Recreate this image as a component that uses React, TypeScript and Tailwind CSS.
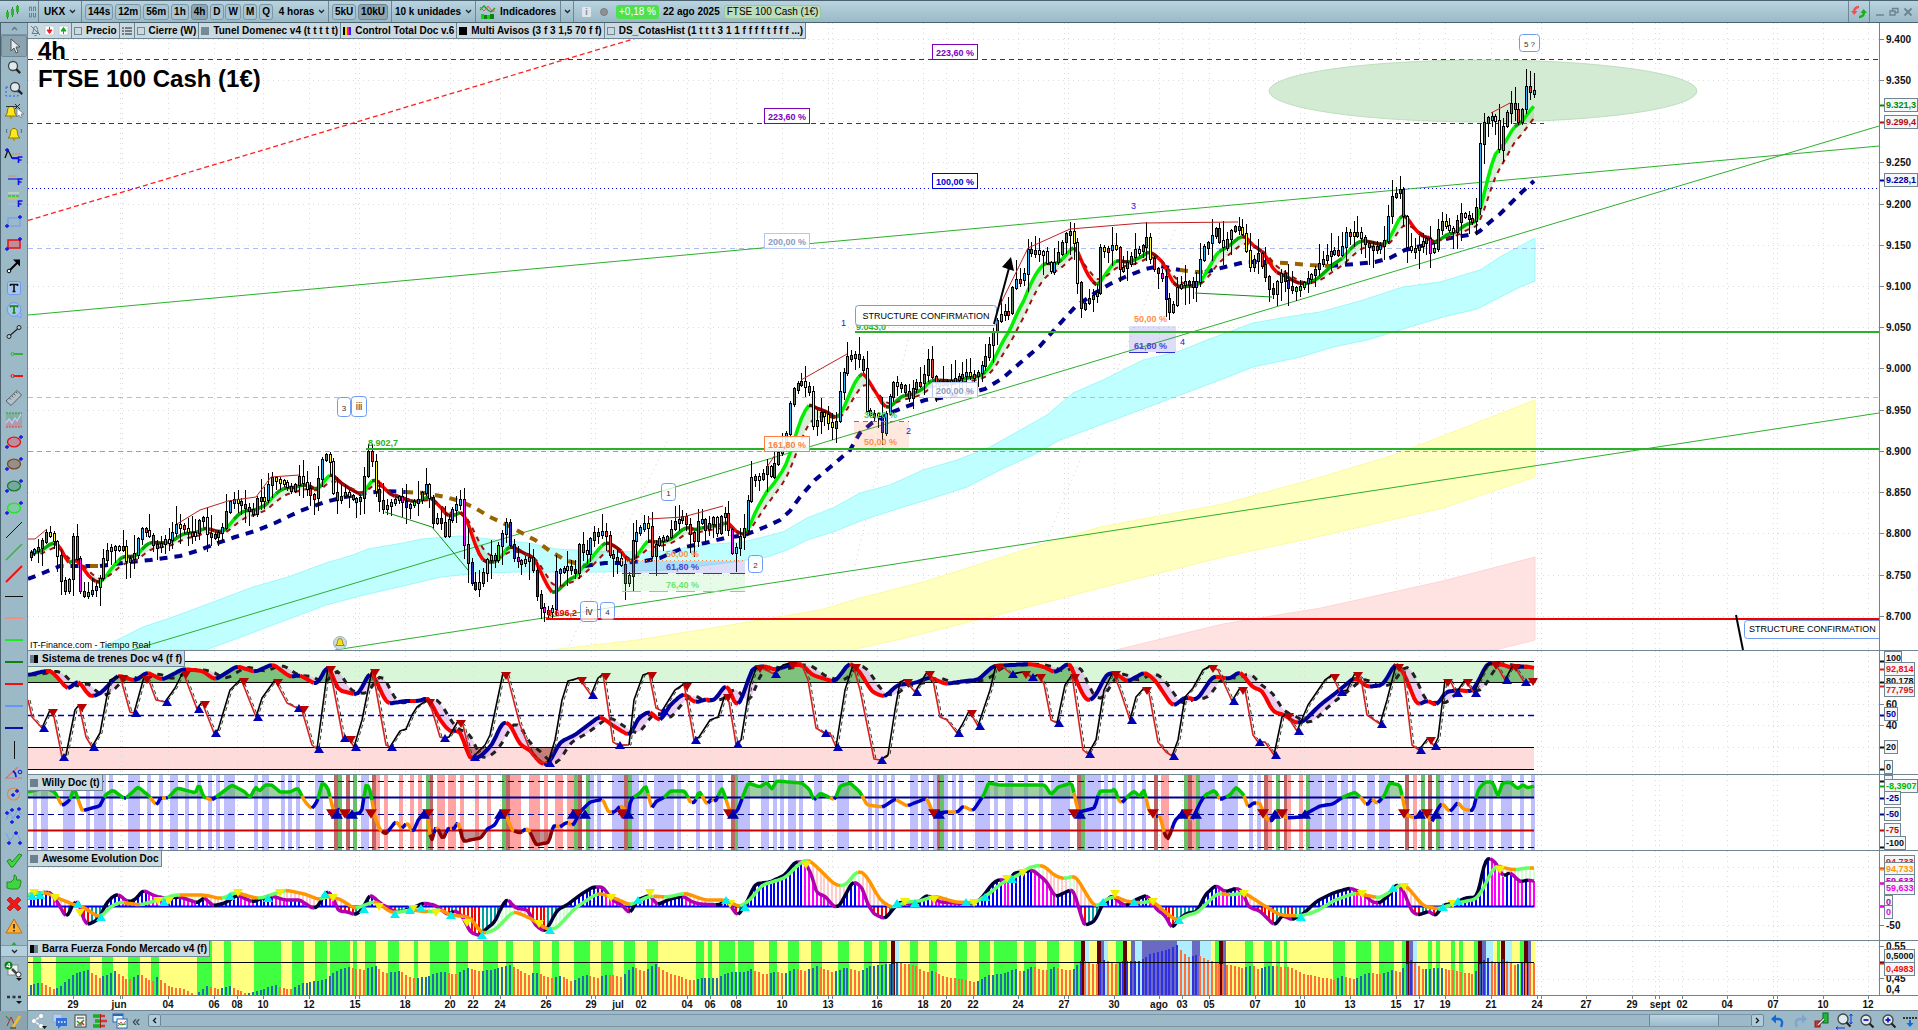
import React from "react";

type Pt = [number, number];

const FONT = "font-['Liberation_Sans',Arial,sans-serif]";
const STEP = 3.835;

function parse(flat: string): Pt[] {
  return flat
    .trim()
    .split(/\s+/)
    .map((p) => {
      const [x, y] = p.split(",");
      return [Number(x), Number(y)] as Pt;
    });
}

function at(pts: Pt[], x: number): number {
  if (x <= pts[0][0]) return pts[0][1];
  for (let i = 1; i < pts.length; i++) {
    if (x <= pts[i][0]) {
      const [x0, y0] = pts[i - 1];
      const [x1, y1] = pts[i];
      return y0 + ((y1 - y0) * (x - x0)) / (x1 - x0);
    }
  }
  return pts[pts.length - 1][1];
}

const str = (pts: Pt[]) => pts.map((p) => `${p[0].toFixed(1)},${p[1].toFixed(1)}`).join(" ");

const BAR_X: number[] = Array.from({ length: 393 }, (_, i) => 30.5 + i * STEP);

/** Resamples a line at an even pace and rounds its corners. */
function soften(pts: Pt[], reach = 2.5): Pt[] {
  const out: Pt[] = [];
  for (let x = 28; x <= 1534; x += 2) {
    out.push([x, (at(pts, x - reach) + 2 * at(pts, x) + at(pts, x + reach)) / 4]);
  }
  return out;
}

function rand(n: number): number {
  const v = Math.sin(n * 127.1 + 311.7) * 43758.5453;
  return v - Math.floor(v);
}

/** Splits a line into runs of one colour each. */
function runs(pts: Pt[], color: (a: Pt, b: Pt) => string): { c: string; pts: Pt[] }[] {
  const out: { c: string; pts: Pt[] }[] = [];
  for (let i = 1; i < pts.length; i++) {
    const c = color(pts[i - 1], pts[i]);
    const last = out[out.length - 1];
    if (last && last.c === c) last.pts.push(pts[i]);
    else out.push({ c, pts: [pts[i - 1], pts[i]] });
  }
  return out;
}

function Runs({ pts, color, w }: { pts: Pt[]; color: (a: Pt, b: Pt) => string; w: number }) {
  return (
    <g fill="none" strokeWidth={w} strokeLinejoin="round">
      {runs(pts, color).map((r, i) => (
        <polyline key={i} points={str(r.pts)} stroke={r.c} />
      ))}
    </g>
  );
}

/* ------------------------------------------------------------------ data */

const CLOSE = parse(`28,556 31,552 39,548 47,530 53,540 58,558 62,587 66,592 70,575 73,533 77,563 81,597 89,593 96,587 102,573 104,553 112,547 123,547 127,563 135,553 140,528 148,533 154,547 160,547 162,540 169,540 177,523 188,533 196,533 202,510 205,533 215,537 223,527 228,503 234,500 249,510 255,517 257,497 265,500 270,477 284,483 292,492 299,477 307,490 314,500 322,460 326,455 332,467 334,503 345,493 353,500 362,497 367,450 372,462 376,493 383,510 391,503 399,497 406,507 418,500 427,482 433,523 439,517 445,537 450,513 460,500 464,547 470,573 473,593 481,580 489,553 494,562 500,540 506,523 512,557 521,563 531,557 536,593 542,613 552,610 554,573 567,567 575,573 578,543 586,557 592,533 605,532 610,557 620,560 627,592 633,537 647,520 652,558 657,540 667,537 675,522 683,517 690,533 695,543 699,513 707,533 712,513 717,533 723,507 728,527 733,557 740,537 745,527 748,497 752,475 760,480 767,467 773,483 775,457 783,447 787,430 791,393 800,380 810,393 813,428 822,410 830,427 835,428 840,390 847,357 857,355 863,370 867,417 877,413 882,433 887,407 893,383 903,387 908,400 915,383 922,383 928,360 933,383 950,382 965,373 975,377 980,370 987,353 992,335 998,318 1003,312 1010,313 1013,280 1023,280 1027,250 1043,252 1050,273 1057,257 1063,240 1068,230 1073,237 1080,310 1088,300 1097,293 1099,248 1110,250 1115,240 1118,270 1125,267 1135,250 1142,253 1145,223 1148,253 1157,277 1160,267 1167,307 1172,317 1175,290 1187,280 1195,290 1202,250 1210,240 1215,227 1222,250 1233,227 1238,227 1245,238 1248,270 1258,253 1263,270 1272,297 1280,273 1290,290 1300,287 1313,273 1320,263 1333,250 1340,257 1345,233 1358,233 1367,247 1380,247 1387,237 1389,200 1400,190 1403,213 1407,247 1415,250 1427,238 1432,260 1440,220 1453,233 1460,213 1475,223 1477,200 1481,128 1484,123 1490,115 1497,123 1500,157 1503,127 1510,103 1515,110 1519,123 1523,107 1526,87 1529,93 1534,91`);

const SLOW_MA = parse(`28,579 43,573 60,566 73,566 90,566 100,566 115,564 130,562 150,560 165,558 180,556 200,550 215,544 235,537 255,531 275,523 300,511 325,502 345,497 365,493 385,491 405,492 425,493 445,497 460,501 475,508 490,517 505,524 520,532 535,540 550,551 565,560 585,566 605,563 620,563 645,561 660,558 685,547 705,543 725,538 745,535 765,527 780,520 790,511 800,497 815,480 835,463 850,450 860,433 872,423 890,413 905,407 925,400 940,398 970,393 985,389 1003,378 1020,363 1040,346 1055,329 1075,307 1095,293 1110,284 1125,277 1145,269 1160,266 1180,270 1195,272 1205,272 1225,267 1245,262 1265,262 1285,263 1310,265 1330,266 1355,264 1375,262 1390,258 1405,250 1425,245 1450,238 1475,234 1480,231 1490,222 1500,214 1510,204 1522,192 1534,181`);

const CYAN = parse(`97,650 143,627 173,617 200,607 253,587 288,577 326,563 353,555 368,549 403,543 422,539 460,536 498,540 529,543 556,549 594,551 610,552 667,551 700,545 743,542 783,532 807,518 833,508 860,493 890,485 923,470 957,460 990,447 1017,432 1047,415 1073,393 1103,380 1143,360 1180,351 1207,340 1253,323 1287,317 1320,312 1360,301 1403,287 1440,282 1480,270 1500,257 1535,238 1535,281 1520,287 1477,309 1443,317 1400,330 1367,340 1333,347 1300,357 1253,367 1220,380 1180,395 1140,410 1100,425 1060,440 1033,455 1000,470 967,487 933,498 900,508 863,520 833,532 807,540 787,550 767,557 733,562 667,570 600,572 517,572 479,573 441,577 403,586 364,595 326,605 233,640 205,650`);
const YELLOW = parse(`550,650 637,640 700,630 820,610 860,598 923,582 983,563 1033,547 1067,537 1100,527 1223,504 1321,477 1394,455 1535,400 1535,477 1443,508 1321,536 1223,557 1100,588 1017,610 897,640 850,650`);
const PINK = parse(`1116,650 1157,640 1223,624 1321,608 1443,581 1535,557 1535,640 1495,650`);

const STOCH = parse(`28,700 32,717 42,728 50,710 54,717 62,757 66,755 75,710 79,705 86,737 92,747 100,733 110,680 120,676 130,712 134,713 144,677 149,681 156,700 165,702 175,688 183,672 197,709 202,702 214,733 218,730 230,690 241,679 256,717 262,698 275,680 287,703 297,708 301,707 312,745 317,749 328,667 333,685 343,738 348,737 354,747 362,720 372,670 375,684 386,745 390,747 400,731 406,729 412,715 417,707 427,700 432,710 440,737 443,738 449,737 458,721 463,725 470,755 473,757 485,745 490,735 503,673 507,675 520,725 532,755 541,762 548,763 555,740 562,700 568,681 579,678 591,695 598,678 603,674 613,742 618,745 629,745 634,700 643,675 649,673 656,708 662,711 675,690 684,684 694,740 699,737 710,720 718,717 725,695 729,702 736,744 741,740 750,685 757,666 770,672 774,674 783,665 790,663 801,663 808,680 816,728 824,733 830,733 836,747 845,690 853,665 860,690 874,759 880,760 888,755 895,710 900,682 905,680 915,692 927,672 933,680 940,717 947,720 957,733 962,725 969,711 974,719 978,726 990,690 996,665 1001,665 1011,674 1023,672 1031,677 1038,675 1044,684 1051,720 1057,723 1065,685 1072,675 1083,750 1088,754 1096,740 1104,690 1113,672 1120,690 1130,720 1136,697 1144,688 1149,693 1158,742 1166,752 1172,756 1178,740 1185,697 1193,688 1203,670 1210,666 1218,670 1232,701 1240,688 1245,690 1253,735 1258,742 1265,742 1274,755 1282,717 1286,714 1297,731 1308,705 1325,680 1332,675 1340,692 1347,690 1355,673 1361,678 1367,715 1380,724 1387,700 1396,665 1403,670 1412,745 1419,750 1428,738 1434,746 1438,738 1445,680 1450,680 1456,693 1465,680 1474,693 1480,680 1487,665 1493,663 1498,668 1505,680 1513,665 1518,672 1524,682 1534,682`);

const TREND = soften(
  parse(`28,675 50,670 58,678 68,690 78,680 90,697 100,694 118,675 135,681 147,672 162,680 183,669 203,671 215,680 237,666 255,672 273,664 290,677 300,675 317,685 328,664 338,690 358,695 371,670 387,704 405,701 420,701 428,697 440,720 450,732 460,730 470,760 480,757 492,745 503,721 510,724 520,745 530,750 540,763 548,765 560,742 575,735 600,716 612,725 620,730 630,736 638,718 650,711 660,722 670,705 684,693 695,703 706,699 714,701 727,683 737,709 745,690 752,668 765,666 775,670 790,665 803,665 812,675 835,682 850,662 860,672 872,692 885,697 897,685 915,683 930,677 945,684 965,681 978,680 993,666 1030,664 1045,667 1055,673 1070,662 1078,685 1087,702 1095,697 1107,673 1117,674 1127,682 1145,672 1155,680 1165,695 1173,707 1185,697 1197,700 1213,676 1230,679 1240,671 1253,688 1262,690 1273,712 1285,715 1295,723 1303,722 1320,705 1337,692 1355,677 1367,687 1383,685 1396,662 1405,675 1417,706 1427,700 1437,706 1445,692 1460,690 1472,692 1480,678 1487,663 1500,664 1513,668 1525,666 1534,668`),
  3.5,
);

const WILLY = parse(`28,792 45,788 55,792 62,806 70,800 74,787 82,811 92,808 100,806 105,795 113,790 125,799 138,787 148,795 157,806 160,798 168,798 177,788 196,793 199,782 203,797 212,800 220,794 232,785 245,792 250,798 256,786 259,792 265,785 272,785 280,792 290,792 298,788 305,802 312,809 318,800 322,782 328,788 334,814 340,808 345,817 355,814 362,812 366,782 371,792 374,815 380,830 386,834 396,821 402,829 407,822 413,833 418,820 427,810 431,845 436,825 443,840 448,828 455,829 458,820 463,842 470,840 481,838 487,829 495,825 500,815 505,813 512,830 520,833 527,828 530,832 536,845 545,843 549,843 553,825 560,827 567,822 573,826 580,812 590,802 603,799 608,812 615,812 620,806 625,808 627,828 630,800 640,793 646,785 652,810 655,802 665,797 670,791 685,791 690,802 695,803 699,790 707,805 712,798 715,803 722,787 730,812 737,812 748,783 760,787 767,782 772,790 776,781 802,783 810,790 814,801 820,793 835,800 840,786 850,783 860,792 867,805 883,807 895,799 907,806 917,802 927,798 933,814 945,812 958,812 963,806 973,811 985,793 988,783 1000,785 1045,785 1051,795 1058,787 1072,783 1078,812 1083,811 1095,808 1099,791 1113,791 1115,787 1118,800 1122,803 1127,797 1134,791 1140,797 1144,788 1149,812 1157,817 1160,815 1164,833 1168,840 1175,820 1183,813 1192,820 1200,803 1205,795 1215,790 1220,800 1230,795 1236,787 1244,795 1248,808 1253,803 1260,803 1265,817 1271,822 1278,812 1287,818 1300,817 1320,806 1333,804 1343,797 1355,792 1363,800 1367,806 1372,798 1377,804 1385,795 1389,783 1400,785 1406,815 1415,818 1425,812 1432,823 1437,810 1442,803 1450,812 1458,802 1463,809 1473,811 1478,790 1485,782 1493,782 1498,798 1502,783 1510,782 1518,789 1523,784 1527,788 1534,786`);

const AO_FAST = parse(`28,895 40,893 50,892 58,903 67,919 72,905 78,900 85,924 90,924 100,918 105,905 112,897 118,894 128,902 135,900 143,890 155,896 165,898 180,897 198,903 204,897 213,906 225,903 237,895 253,902 262,898 272,896 285,900 300,900 312,908 317,908 327,890 333,897 338,911 348,912 355,915 362,910 370,894 380,903 395,912 403,911 415,907 423,903 435,905 448,915 455,910 463,917 470,932 480,936 487,928 495,922 500,910 507,898 515,908 528,910 535,925 545,932 552,920 557,910 567,905 580,895 593,887 603,887 612,900 622,905 630,914 637,900 650,895 657,905 670,899 683,896 692,902 700,904 720,905 727,898 733,910 738,916 747,902 755,884 770,882 785,875 795,862 805,862 813,878 816,893 825,896 835,908 840,905 848,890 853,881 862,887 868,905 874,914 885,919 893,909 900,902 915,905 927,895 940,902 970,904 980,900 993,883 1000,879 1008,882 1014,873 1022,872 1033,870 1047,882 1055,897 1073,889 1078,905 1084,926 1095,921 1102,905 1112,895 1120,903 1127,906 1135,900 1147,895 1157,910 1165,915 1172,929 1178,920 1187,913 1197,912 1205,895 1216,885 1225,892 1237,888 1243,892 1248,907 1260,911 1275,926 1282,915 1292,920 1303,914 1317,901 1333,893 1350,888 1363,893 1372,902 1380,903 1390,894 1397,883 1403,890 1412,912 1418,915 1430,911 1435,917 1443,905 1455,903 1465,898 1477,897 1481,880 1485,860 1490,858 1496,863 1503,877 1510,872 1520,882 1527,880 1534,881`);

const AO_SLOW = parse(`28,895 45,892 55,897 75,905 83,907 100,918 110,907 120,902 140,905 158,900 175,895 205,895 222,899 235,892 255,898 262,898 285,890 305,894 320,900 327,896 340,899 355,909 375,901 392,913 410,910 430,912 440,909 450,915 470,917 482,934 495,930 505,920 513,911 530,918 548,930 557,928 575,908 598,893 612,897 630,905 650,896 668,897 685,893 705,900 725,900 740,907 750,900 762,885 785,878 800,863 808,859 820,870 835,885 845,886 858,870 866,875 880,900 892,908 905,902 920,901 935,896 955,902 975,903 990,893 1003,882 1015,877 1030,867 1043,865 1055,876 1065,879 1075,875 1084,890 1095,908 1105,900 1115,896 1125,901 1140,903 1153,901 1165,912 1177,921 1187,915 1197,913 1210,900 1218,893 1230,895 1245,893 1260,903 1280,915 1300,916 1315,912 1335,900 1355,893 1380,898 1393,890 1403,883 1410,890 1423,906 1438,909 1450,905 1462,902 1477,899 1485,885 1495,865 1505,868 1515,870 1525,868 1534,868`);

const AO_UP: Pt[] = [[32, 896], [40, 895], [78, 904], [101, 917], [164, 902], [230, 896], [268, 898], [325, 894], [364, 909], [395, 914], [410, 910], [421, 908], [451, 915], [482, 935], [550, 930], [638, 900], [726, 900], [745, 907], [897, 903], [915, 903], [966, 902], [985, 897], [1012, 879], [1103, 902], [1134, 902], [1179, 920], [1301, 917], [1393, 888], [1443, 907], [1458, 901]];
const AO_DOWN: Pt[] = [[34, 893], [55, 898], [80, 913], [158, 901], [169, 901], [238, 893], [280, 893], [333, 898], [379, 907], [413, 909], [436, 913], [467, 923], [539, 924], [611, 898], [650, 893], [730, 904], [806, 865], [905, 902], [934, 900], [974, 903], [1007, 879], [1023, 873], [1115, 894], [1153, 902], [1244, 894], [1362, 894], [1404, 887], [1453, 904], [1500, 870]];

const FORCE = parse(`31,985 40,982 55,990 62,985 75,973 88,970 100,978 115,971 128,980 140,974 152,982 157,977 170,987 185,989 195,995 207,986 220,989 230,986 245,993 255,992 275,985 290,990 303,983 325,980 335,972 347,967 363,970 375,966 385,973 400,971 412,978 425,977 443,971 455,975 467,968 480,971 495,969 510,965 520,970 530,975 535,972 550,978 560,976 572,981 585,975 597,978 607,974 622,977 632,967 645,971 655,964 668,973 680,976 692,981 700,978 717,978 730,972 745,972 751,969 765,975 775,972 785,973 795,968 805,971 817,966 833,972 845,968 860,971 870,966 890,964 897,963 915,965 925,972 933,971 945,977 960,979 975,982 990,975 1003,974 1015,969 1022,972 1033,966 1045,971 1055,967 1072,971 1082,960 1095,965 1105,960 1115,964 1125,961 1140,961 1152,953 1168,950 1177,945 1187,957 1198,955 1215,963 1230,965 1243,968 1252,965 1258,969 1270,966 1290,967 1303,974 1320,977 1335,980 1343,976 1355,979 1367,973 1380,974 1393,970 1400,972 1411,960 1422,969 1443,968 1460,972 1475,974 1481,962 1487,958 1497,964 1503,959 1515,965 1523,962 1534,963`);

/** Colour bands: start of the block, then from-to pairs in thirds of a unit. */
type Bands = [number, string][];

const WILLY_BANDS: Record<string, Bands> = {
  "#bfbffd": [
    [20, "38-50 64-84 129-165 198-210 222-258 266-278 325-360 381-393 417-429 450-474 495-507 531-543 564-576 588-600 612-645 702-714 726-747 783-795 804-816 828-840 885-909 1023-1047"],
    [500, "270-282 291-303 336-372 396-417 429-441 462-522 531-543 588-600 624-636 645-669 714-750 783-807 819-831 840-852 864-888 897-909 942-966 1011-1047 1104-1116 1125-1137 1149-1161 1173-1185 1230-1254 1263-1287 1299-1311 1332-1344 1356-1368 1377-1389 1425-1470 1482-1494"],
    [1000, "15-39 72-84 117-129 153-210 255-303 312-324 336-348 369-381 393-405 426-438 600-645 666-714 747-759 771-783 930-966 975-1011 1023-1044 1056-1068 1101-1125 1137-1170 1320-1332 1353-1377 1389-1410 1422-1458 1467-1479"],
    [1440, "183-216 240-252 273-285"],
  ],
  "#c06868": [
    [20, "942-954 978-990 1056-1068 1230-1239 1458-1470"],
    [500, "234-246 372-384 693-705 1311-1320"],
    [1000, "231-243 462-474 564-576 792-804 852-861 1215-1227 1284-1296"],
  ],
  "#68c068": [
    [20, "954-966 999-1011 1218-1230 1446-1458"],
    [500, "222-234 258-270 384-396 705-714 1320-1332"],
    [1000, "243-255 552-564 588-600 828-840 918-930 1263-1275 1308-1320"],
  ],
  "#ffa3a3": [
    [20, "1068-1080 1092-1104 1137-1149 1170-1182 1194-1206 1251-1275 1284-1308 1320-1332 1365-1377 1401-1413 1470-1503"],
    [500, "87-120 132-144 165-189 201-222"],
    [1000, "483-507 576-588 804-816 861-873 897-909 1239-1251"],
  ],
};

const FORCE_BANDS: Record<string, Bands> = {
  "#40ff40": [
    [20, "38-63 108-210 246-279 324-360 393-417 531-576 612-633 702-783 816-852 885-921 930-990 999-1011 1035-1068 1104-1137 1182-1194 1230-1287 1308-1344 1389-1434 1458-1479"],
    [500, "99-120 156-177 222-270 303-339 372-405 441-474 588-612 624-636 657-705 714-762 807-831 864-897 933-966 1014-1047 1092-1116 1137-1161 1230-1254 1287-1311 1368-1401 1437-1470 1482-1500"],
    [1000, "0-51 72-108 141-177 222-243 348-369 645-657 735-759 792-816 828-840 852-861 999-1035 1068-1113 1137-1182 1206-1218 1284-1296 1308-1320 1353-1365 1377-1389 1422-1434 1491-1500"],
    [1440, "240-252"],
  ],
  "#600000": [
    [500, "1173-1185"],
    [1000, "243-255 291-303 369-381 657-669 1218-1227 1434-1446"],
    [1440, "183-195 252-264"],
  ],
  "#aeeeff": [
    [500, "1185-1197"],
    [1000, "255-267 312-324 405-426 531-576 600-633 1239-1251 1458-1479"],
    [1440, "195-216"],
  ],
  "#6a6ac4": [
    [1000, "303-312 393-405 426-531 576-600 669-678 1227-1239 1446-1458"],
    [1440, "264-273"],
  ],
};

function BandRects({ bands, y, h }: { bands: Record<string, Bands>; y: number; h: number }) {
  return (
    <g shapeRendering="crispEdges">
      {Object.entries(bands).map(([fill, blocks]) =>
        blocks.map(([start, list]) =>
          list.split(" ").map((pair) => {
            const [a, b] = pair.split("-").map(Number);
            return <rect key={`${fill}${start}${pair}`} x={start + a / 3} y={y} width={(b - a) / 3} height={h} fill={fill} />;
          }),
        ),
      )}
    </g>
  );
}

const GRID_X = [73, 120, 122, 168, 214, 237, 263, 309, 355, 359, 405, 450, 473, 500, 546, 591, 595, 641, 687, 710, 736, 782, 828, 832, 877, 923, 946, 973, 1018, 1064, 1068, 1114, 1159, 1182, 1209, 1255, 1300, 1304, 1350, 1396, 1419, 1445, 1491, 1537, 1541, 1586, 1632, 1655, 1659, 1682, 1727, 1773, 1777, 1823, 1868];

const DATES: [string, number][] = [
  ["29", 73], ["jun", 119], ["04", 168], ["06", 214], ["08", 237], ["10", 263], ["12", 309], ["15", 355], ["18", 405], ["20", 450], ["22", 473], ["24", 500],
  ["26", 546], ["29", 591], ["jul", 618], ["02", 641], ["04", 687], ["06", 710], ["08", 736], ["10", 782], ["13", 828], ["16", 877], ["18", 923], ["20", 946],
  ["22", 973], ["24", 1018], ["27", 1064], ["30", 1114], ["ago", 1159], ["03", 1182], ["05", 1209], ["07", 1255], ["10", 1300], ["13", 1350], ["15", 1396],
  ["17", 1419], ["19", 1445], ["21", 1491], ["24", 1537], ["27", 1586], ["29", 1632], ["sept", 1660], ["02", 1682], ["04", 1727], ["07", 1773], ["10", 1823], ["12", 1868],
];

/* ------------------------------------------------------- chart primitives */

function Grid({ top, bottom, rows }: { top: number; bottom: number; rows: number[] }) {
  return (
    <g stroke="#dcdcdc" strokeWidth="1" strokeDasharray="1 4" shapeRendering="crispEdges">
      {GRID_X.map((x) => (
        <line key={x} x1={x + 0.5} x2={x + 0.5} y1={top} y2={bottom} />
      ))}
      {rows.map((y) => (
        <line key={`r${y}`} x1="28" x2="1879" y1={y + 0.5} y2={y + 0.5} />
      ))}
    </g>
  );
}

function Plot({ top, height, label, children }: { top: number; height: number; label: string; children: React.ReactNode }) {
  return (
    <svg viewBox={`28 ${top} 1890 ${height}`} className="block h-full w-full" role="img" aria-label={label}>
      {children}
      <line x1="1879.5" x2="1879.5" y1={top} y2={top + height} stroke="#6f8692" />
    </svg>
  );
}

function Tick({ y, text }: { y: number; text?: string }) {
  return (
    <g>
      <line x1="1880" x2="1884" y1={y + 0.5} y2={y + 0.5} stroke="#6f8692" />
      {text && (
        <text x="1886" y={y + 4} fontSize="10" fontWeight="700" fill="#111">
          {text}
        </text>
      )}
    </g>
  );
}

function Tag({ y, text, color = "#111", w, mark = y }: { y: number; text: string; color?: string; w: number; mark?: number }) {
  return (
    <g>
      <line x1="1880" x2="1884" y1={mark + 0.5} y2={mark + 0.5} stroke={color} strokeWidth="2" />
      <rect x="1884.5" y={y - 6.5} width={w} height="13" fill="#f4f6f7" stroke="#6f8692" />
      <text x="1886" y={y + 3} fontSize="9" fontWeight="700" fill={color}>
        {text}
      </text>
    </g>
  );
}

function Level({ x, y, text, color, ink = color }: { x: number; y: number; text: string; color: string; ink?: string }) {
  return (
    <g>
      <rect x={x + 0.5} y={y + 0.5} width="45" height="15" fill="#fff" fillOpacity="0.9" stroke={color} />
      <text x={x + 23} y={y + 12} fontSize="9" fontWeight="700" fill={ink} textAnchor="middle">
        {text}
      </text>
    </g>
  );
}

function Note({ x, y, w, h, text, size = 8, ink = "#333" }: { x: number; y: number; w: number; h: number; text: string; size?: number; ink?: string }) {
  return (
    <g>
      <rect x={x + 0.5} y={y + 0.5} width={w} height={h} rx="3" fill="#fff" fillOpacity="0.75" stroke="#6f9cf0" />
      <text x={x + w / 2 + 0.5} y={y + h / 2 + 4} fontSize={size} fill={ink} textAnchor="middle">
        {text}
      </text>
    </g>
  );
}

const upTri = (x: number, y: number, r: number) => `${x - r},${y + r * 0.8} ${x + r},${y + r * 0.8} ${x},${y - r * 0.8}`;
const downTri = (x: number, y: number, r: number) => `${x - r},${y - r * 0.8} ${x + r},${y - r * 0.8} ${x},${y + r * 0.8}`;

/* ------------------------------------------------------------- price plot */

function ema(alpha: number, src: Pt[]): Pt[] {
  let v = src[0][1];
  return src.map(([x, y]) => {
    v += alpha * (y - v);
    return [x, v] as Pt;
  });
}

const BARS: Pt[] = BAR_X.map((x) => [x, at(CLOSE, x)]);
const FAST = ema(0.5, ema(0.26, BARS));
const SIGNAL = ema(0.22, ema(0.3, BARS)).map(([x, y]) => [x, y + 2] as Pt);

function fastColor(a: Pt, b: Pt): string {
  const d = b[1] - a[1];
  if (d < -4) return "#00f000";
  if (d < -1.1) return "#00ac00";
  if (d < -0.3) return "#0a780a";
  if (d < 0.3) return "#344200";
  if (d < 1.2) return "#5a1a00";
  if (d < 3.6) return "#960000";
  return "#fa0000";
}

function Candles() {
  return (
    <g shapeRendering="crispEdges">
      {BARS.map(([x, close], i) => {
        const open = i ? BARS[i - 1][1] : close + 4;
        const up = close < open;
        const drop = at(SLOW_MA, x) < close - 6;
        const r = rand(i);
        const upFill = drop ? (r > 0.6 ? "#38e038" : r > 0.3 ? "#5fd8ff" : "#6b6bd0") : r > 0.45 ? "#627a62" : "#2fb0f0";
        const downFill = drop ? (r > 0.65 ? "#ff10ff" : r > 0.3 ? "#2c2cc8" : "#8c5a5a") : r > 0.5 ? "#ffff2a" : "#f03c3c";
        const px = Math.round(x);
        const top = Math.round(Math.min(open, close)) - 1;
        const body = Math.max(5, Math.round(Math.abs(open - close)) + 2);
        const hi = top - 1 - rand(i + 900) ** 2 * 18;
        const lo = top + body + 1 + rand(i + 400) ** 2 * 18;
        return (
          <g key={i}>
            <rect x={px} y={hi} width="1" height={lo - hi} fill="#000" />
            <rect x={px - 1} y={top} width="3" height={body} fill="#000" />
            <rect x={px} y={top + 1} width="1" height={body - 2} fill={up ? upFill : downFill} />
          </g>
        );
      })}
    </g>
  );
}

const RED_LINES = [
  "28,539 35,539 47,529",
  "177,524 200,510 228,501 256,497 271,477 299,475",
  "648,519 683,517 723,506",
  "767,467 775,455",
  "801,380 847,354",
  "1000,305 1028,248 1070,229 1143,223 1238,222",
  "1491,113 1510,103",
];

const slowBrown = (a: Pt) => ((a[0] > 385 && a[0] < 585) || (a[0] > 1178 && a[0] < 1200) || (a[0] > 1262 && a[0] < 1330) || (a[0] > 85 && a[0] < 100) ? "#966400" : "#00008c");

function PricePlot() {
  return (
    <Plot top={23} height={627} label="FTSE 100 Cash, 4 horas">
      <Grid top={23} bottom={650} rows={[39, 80, 121, 162, 204, 245, 286, 327, 368, 410, 451, 492, 533, 575, 616]} />
      <g stroke="#cfcfcf" strokeDasharray="1 4">
        <line x1="567" y1="650" x2="668" y2="440" />
        <line x1="855" y1="565" x2="908" y2="340" />
        <line x1="1018" y1="610" x2="1175" y2="230" />
      </g>
      <polygon points={str(CYAN)} fill="#bfffff" stroke="#a0f8f8" />
      <polygon points={str(YELLOW)} fill="#ffffbf" stroke="#fbfba0" />
      <polygon points={str(PINK)} fill="#ffe3e3" stroke="#ffd4d4" />

      <g fill="none" shapeRendering="crispEdges">
        <line x1="28" x2="1879" y1="59.5" y2="59.5" stroke="#7a00b8" strokeDasharray="5 4" />
        <line x1="28" x2="1544" y1="123.5" y2="123.5" stroke="#7a00b8" strokeDasharray="5 4" />
        <line x1="28" x2="1879" y1="188.5" y2="188.5" stroke="#0000f0" strokeDasharray="1 3" />
        <line x1="28" x2="1544" y1="248.5" y2="248.5" stroke="#aabef4" strokeDasharray="5 4" />
        <line x1="28" x2="1879" y1="397.5" y2="397.5" stroke="#aabef4" strokeDasharray="5 4" />
        <line x1="28" x2="1544" y1="451.5" y2="451.5" stroke="#ff8040" strokeDasharray="5 4" />
      </g>

      <ellipse cx="1483" cy="91" rx="214" ry="31" fill="#d3ead3" stroke="#bfdfbf" />

      <g stroke="#2cb02c" strokeWidth="1" fill="none">
        <line x1="28" y1="315" x2="1879" y2="146" />
        <line x1="132" y1="650" x2="1879" y2="126" />
        <line x1="335" y1="650" x2="1879" y2="413" />
      </g>
      <line x1="28" y1="220.5" x2="640" y2="37" stroke="#ff2020" strokeDasharray="5 3" strokeWidth="1.3" />

      <polygon points={`${str(FAST)} ${str([...SIGNAL].reverse())}`} fill="#8fce8f" fillOpacity="0.35" />
      <g strokeWidth="4" fill="none">
        {runs(SLOW_MA, slowBrown).map((r, i) => (
          <polyline key={i} points={str(r.pts)} stroke={r.c} strokeDasharray="8 7" />
        ))}
      </g>
      <Runs pts={FAST} color={fastColor} w={3.5} />
      <polyline points={str(SIGNAL)} fill="none" stroke="#a01010" strokeWidth="2" strokeDasharray="5 5" />
      <Candles />
      <g fill="none" stroke="#c02020" strokeWidth="1">
        {RED_LINES.map((p) => (
          <polyline key={p} points={p} />
        ))}
      </g>
      <g fill="none" stroke="#109010" strokeWidth="1">
        <polyline points="385,512 432,527 468,570" />
        <polyline points="1195,293 1272,297" />
      </g>

      <g shapeRendering="crispEdges">
        <rect x="622" y="561" width="123" height="12" fill="#6464dc" fillOpacity="0.22" />
        <rect x="622" y="573" width="123" height="18" fill="#64e664" fillOpacity="0.15" />
        <line x1="622" x2="745" y1="560.5" y2="560.5" stroke="#ff8040" strokeDasharray="1 3" />
        <line x1="622" x2="745" y1="573.5" y2="573.5" stroke="#3030d0" strokeDasharray="19 8" />
        <line x1="622" x2="745" y1="591.5" y2="591.5" stroke="#6ce66c" strokeDasharray="19 8" />
        <rect x="854" y="422" width="55" height="26" fill="#ff8040" fillOpacity="0.18" />
        <line x1="854" x2="909" y1="421.5" y2="421.5" stroke="#2cb02c" strokeDasharray="5 4" />
        <rect x="1129" y="326" width="47" height="26" fill="#6464dc" fillOpacity="0.22" />
        <line x1="1129" x2="1176" y1="352.5" y2="352.5" stroke="#3030d0" strokeDasharray="19 8" />
        <line x1="855" x2="1879" y1="332" y2="332" stroke="#2cb02c" strokeWidth="2" />
        <line x1="366" x2="1879" y1="449" y2="449" stroke="#2cb02c" strokeWidth="2" />
        <line x1="546" x2="1879" y1="619" y2="619" stroke="#f00000" strokeWidth="2" />
      </g>

      <g fontSize="9" fontWeight="700">
        <text x="666" y="557" fill="#ff9048">50,00 %</text>
        <text x="666" y="570" fill="#4848d0">61,80 %</text>
        <text x="666" y="588" fill="#6ce66c">76,40 %</text>
        <text x="864" y="418" fill="#50c850">38,20 %</text>
        <text x="864" y="445" fill="#ff9048">50,00 %</text>
        <text x="1134" y="322" fill="#ff9048">50,00 %</text>
        <text x="1134" y="349" fill="#4848d0">61,80 %</text>
        <text x="368" y="446" fill="#2cb02c">8.902,7</text>
        <text x="856" y="330" fill="#2cb02c">9.043,0</text>
        <text x="547" y="616" fill="#f00000">8.696,2</text>
      </g>

      <Level x={932} y={44} text="223,60 %" color="#7a00b8" />
      <Level x={764} y={108} text="223,60 %" color="#7a00b8" />
      <Level x={932} y={173} text="100,00 %" color="#0000d8" />
      <Level x={764} y={233} text="200,00 %" color="#b4c6f4" ink="#8c9cc4" />
      <Level x={932} y={382} text="200,00 %" color="#b4c6f4" ink="#8c9cc4" />
      <Level x={764} y={436} text="161,80 %" color="#ff8040" />

      <Note x={1519} y={34} w={20} h={17} text="5 ?" />
      <Note x={337} y={397} w={13} h={19} text="3" />
      <Note x={351} y={396} w={15} h={20} text="iii" size={10} />
      <Note x={661} y={483} w={14} h={17} text="1" />
      <Note x={748} y={555} w={14} h={17} text="2" />
      <Note x={580} y={601} w={17} h={20} text="iv" size={10} />
      <Note x={600} y={602} w={14} h={17} text="4" />
      <Note x={855} y={305} w={141} h={20} text="STRUCTURE CONFIRMATION" size={9} ink="#000" />
      <Note x={1744} y={620} w={150} h={18} text="" />
      <rect x="1880" y="618" width="38" height="32" fill="#fff" />
      <text x="1749" y="632" fontSize="9" fill="#000">STRUCTURE CONFIRMATION</text>

      <g fontSize="9" fill="#1414f0">
        <text x="841" y="326">1</text>
        <text x="906" y="434">2</text>
        <text x="1131" y="209">3</text>
        <text x="1180" y="345">4</text>
      </g>

      <line x1="994" y1="324" x2="1009" y2="268" stroke="#000" strokeWidth="2" />
      <polygon points="1011,257 1002,267 1014,271" fill="#000" />
      <line x1="1736" y1="615" x2="1743" y2="650" stroke="#000" strokeWidth="2" />

      <circle cx="340" cy="643" r="6.5" fill="#c9dbe4" stroke="#9fb4be" />
      <path d="M335.500 645.500 q2 -1 2 -4 q0 -3 2.500 -3 q2.500 0 2.500 3 q0 3 2 4 z" fill="#f8e018" stroke="#806c00" strokeWidth="0.7" />

      <g fontWeight="700" fill="#000">
        <text x="38" y="59" fontSize="24">4h</text>
        <text x="38" y="87" fontSize="24">FTSE 100 Cash (1€)</text>
      </g>
      <text x="30" y="648" fontSize="9" fill="#000">IT-Finance.com - Tiempo Real</text>

      {([["9.400", 39], ["9.350", 80], ["9.250", 162], ["9.200", 204], ["9.150", 245], ["9.100", 286], ["9.050", 327], ["9.000", 368], ["8.950", 410], ["8.900", 451], ["8.850", 492], ["8.800", 533], ["8.750", 575], ["8.700", 616]] as [string, number][]).map(([t, y]) => (
        <Tick key={t} y={y} text={t} />
      ))}
      <Tag y={105} text="9.321,3" color="#008c00" w={33} />
      <Tag y={122} text="9.299,4" color="#b01010" w={33} />
      <Tag y={180} text="9.228,1" color="#0000a0" w={33} />
    </Plot>
  );
}

/* -------------------------------------------------------------- sub plots */

function StochPlot() {
  const zone = 682.5;
  const lag: Pt[] = BAR_X.map((x) => [x, (at(TREND, x - 6) + at(TREND, x - 10) + at(TREND, x - 14)) / 3]);
  const above = TREND.map(([x, y]) => [x, Math.min(y, zone)] as Pt);
  const below = TREND.map(([x, y]) => [x, Math.max(y, 747.5)] as Pt);
  const turns = STOCH.slice(1, -1).map((p, i) => {
    const a = STOCH[i][1];
    const b = STOCH[i + 2][1];
    if (p[1] > a && p[1] >= b) return { x: p[0] + 2, y: p[1], up: true };
    if (p[1] < a && p[1] <= b) return { x: p[0] + 3, y: p[1] + 3, up: false };
    return null;
  });
  return (
    <Plot top={651} height={123} label="Sistema de trenes">
      <rect x="28" y="661" width="1506" height="21" fill="#d9f6d9" />
      <rect x="28" y="748" width="1506" height="21" fill="#ffdcdc" />
      <Grid top={651} bottom={774} rows={[682, 704, 725, 747]} />
      <polygon points={`${str(TREND)} ${str([...lag].reverse())}`} fill="#d8a0e8" fillOpacity="0.5" />
      <polygon points={`28,${zone} ${str(above)} 1534,${zone}`} fill="#6db86d" fillOpacity="0.85" />
      <polygon points={`28,747.5 ${str(below)} 1534,747.5`} fill="#c07068" fillOpacity="0.85" />
      <g stroke="#000" strokeWidth="1" shapeRendering="crispEdges">
        <line x1="28" x2="1534" y1="661.5" y2="661.5" />
        <line x1="28" x2="1534" y1="682.5" y2="682.5" />
        <line x1="28" x2="1534" y1="747.5" y2="747.5" />
        <line x1="28" x2="1534" y1="769.5" y2="769.5" />
      </g>
      <line x1="28" x2="1534" y1="715.5" y2="715.5" stroke="#0000a0" strokeDasharray="6 4" strokeWidth="1.5" />
      <polyline points={str(lag)} fill="none" stroke="#202020" strokeWidth="3" strokeDasharray="6 6" />
      <Runs pts={TREND} color={(a, b) => (b[1] < a[1] ? "#000098" : "#fa0000")} w={4} />
      <polyline points={str(STOCH.map(([x, y]) => [x + 2, y]))} fill="none" stroke="#304030" strokeDasharray="4 3" />
      <Runs pts={STOCH} color={(a, b) => (b[1] < a[1] ? "#000" : "#d82020")} w={1.6} />
      {turns.map(
        (t, i) => t && <polygon key={i} points={t.up ? upTri(t.x, t.y, 5) : downTri(t.x, t.y, 5)} fill={t.up ? "#0000b8" : "#b80000"} />,
      )}
      <polygon points={downTri(1533, 682, 5)} fill="#b80000" />
      <Tag y={658} text="100" w={17} mark={661} />
      <Tag y={681} text="80,178" w={30} mark={682} />
      <Tag y={669} text="92,814" color="#f01010" w={30} />
      <Tag y={690} text="77,795" color="#d02020" w={30} mark={686} />
      <Tick y={704} text="60" />
      <Tick y={725} text="40" />
      <Tag y={714} text="50" color="#0000b0" w={13} mark={715} />
      <Tag y={747} text="20" w={13} />
      <Tag y={767} text="0" w={8} mark={769} />
    </Plot>
  );
}

function willyColor(a: Pt, b: Pt): string {
  const mid = (a[1] + b[1]) / 2;
  if (mid < 797.5) return "#00c800";
  if (mid > 831) return "#8c0000";
  return b[1] < a[1] ? "#0000c8" : "#ff9600";
}

const WILLY_DOWN = [332, 345, 371, 428, 505, 577, 622, 729, 934, 1074, 1153, 1187, 1263, 1282, 1404, 1427];
const WILLY_UP = [337, 352, 424, 500, 573, 585, 628, 733, 939, 1080, 1182, 1196, 1275, 1305, 1420, 1436];

function WillyPlot() {
  const dense = soften(WILLY, 1.5);
  return (
    <Plot top={775} height={75} label="Willy Doc">
      <Grid top={775} bottom={850} rows={[]} />
      <BandRects bands={WILLY_BANDS} y={775} h={75} />
      <polygon points={`28,797.5 ${str(dense.map(([x, y]) => [x, Math.min(y, 797.5)]))} 1534,797.5`} fill="#60b060" fillOpacity="0.6" />
      <polygon points={`28,830.5 ${str(dense.map(([x, y]) => [x, Math.max(y, 830.5)]))} 1534,830.5`} fill="#904040" fillOpacity="0.55" />
      <g strokeDasharray="6 4" shapeRendering="crispEdges">
        <line x1="28" x2="1534" y1="781.5" y2="781.5" stroke="#000" />
        <line x1="28" x2="1534" y1="847.5" y2="847.5" stroke="#000" />
        <line x1="28" x2="1534" y1="814.5" y2="814.5" stroke="#000090" strokeWidth="1" />
      </g>
      <line x1="28" x2="1534" y1="797.5" y2="797.5" stroke="#000090" strokeWidth="2" />
      <line x1="28" x2="1534" y1="830.5" y2="830.5" stroke="#c80000" strokeWidth="2" />
      <Runs pts={dense} color={willyColor} w={3.5} />
      {WILLY_DOWN.map((x) => (
        <polygon key={x} points={downTri(x, 814, 6)} fill="#b00000" />
      ))}
      {WILLY_UP.map((x) => (
        <polygon key={x} points={upTri(x, 814, 6)} fill="#0000b0" />
      ))}
      <Tag y={782} text="0" w={8} mark={781} />
      <Tag y={786} text="-8,3907" color="#00b400" w={33} />
      <Tag y={798} text="-25" color="#000090" w={16} />
      <Tag y={814} text="-50" color="#000090" w={16} />
      <Tag y={830} text="-75" color="#c80000" w={16} />
      <Tag y={843} text="-100" w={21} mark={847} />
    </Plot>
  );
}

function AwesomePlot() {
  const zero = 906.5;
  const fast = soften(AO_FAST);
  const slow = soften(AO_SLOW, 4);
  return (
    <Plot top={851} height={89} label="Awesome Evolution Doc">
      <Grid top={851} bottom={940} rows={[867, 886, 925]} />
      <g shapeRendering="crispEdges">
        {BAR_X.map((x) => {
          const y = at(AO_FAST, x);
          const rising = y <= at(AO_FAST, x - STEP);
          const s = at(AO_SLOW, x);
          const fill = y < zero ? (rising ? "#0000ff" : "#ff00ff") : rising ? "#00a0a0" : "#ff0000";
          const gapFill = s <= at(AO_SLOW, x - STEP) ? "#d4ffd4" : "#ffcccc";
          return (
            <g key={x}>
              <rect x={Math.round(x) - 1} y={Math.min(s, y)} width="2" height={Math.abs(s - y)} fill={gapFill} />
              <rect x={Math.round(x) - 1} y={Math.min(y, zero)} width="2" height={Math.abs(y - zero)} fill={fill} />
            </g>
          );
        })}
      </g>
      <line x1="28" x2="1534" y1="906.5" y2="906.5" stroke="#0000f0" strokeWidth="2" />
      <Runs pts={fast} color={(a, b) => (b[1] < a[1] ? "#000038" : "#b000b0")} w={3.5} />
      <Runs pts={slow} color={(a, b) => (b[1] < a[1] ? "#66ff66" : "#ff9600")} w={3.5} />
      {AO_DOWN.map(([x, y]) => (
        <polygon key={x} points={downTri(x, y, 5)} fill="#f0f000" />
      ))}
      {AO_UP.map(([x, y]) => (
        <polygon key={x} points={upTri(x, y, 5)} fill="#00f0f0" />
      ))}
      <Tag y={862} text="94,733" color="#f01010" w={30} mark={868} />
      <Tag y={869} text="94,733" color="#ff9600" w={30} />
      <Tag y={881} text="59,633" color="#b000b0" w={30} mark={883} />
      <Tag y={888} text="59,633" color="#f000f0" w={30} mark={883} />
      <Tag y={902} text="0" color="#b000b0" w={8} mark={906} />
      <Tag y={912} text="0" color="#f000f0" w={8} mark={906} />
      <Tick y={925} text="-50" />
    </Plot>
  );
}

function ForcePlot() {
  return (
    <Plot top={941} height={54} label="Barra Fuerza Fondo Mercado">
      <Grid top={941} bottom={995} rows={[946, 979]} />
      <rect x="28" y="941" width="1507" height="54" fill="#ffff80" />
      <BandRects bands={FORCE_BANDS} y={941} h={54} />
      <g shapeRendering="crispEdges">
        {BAR_X.map((x) => {
          const y = at(FORCE, x);
          const rising = y <= at(FORCE, x - STEP);
          return <rect key={x} x={Math.round(x) - 1} y={y} width="2" height={Math.max(0, 995 - y)} fill={y < 963 && rising ? "#3030e0" : rising ? "#2070a8" : "#ff7038"} />;
        })}
        <line x1="28" x2="1534" y1="962.5" y2="962.5" stroke="#000" />
      </g>
      <Tick y={946} text="0,55" />
      <Tick y={978} text="0,45" />
      <text x="1886" y="993" fontSize="10" fontWeight="700" fill="#111">0,4</text>
      <Tag y={956} text="0,5000" w={30} mark={962} />
      <Tag y={969} text="0,4983" color="#f01010" w={30} mark={963} />
    </Plot>
  );
}

/* ------------------------------------------------------------------ icons */

function Ico({ children, s = 20 }: { children: React.ReactNode; s?: number }) {
  return (
    <svg viewBox={`0 0 ${s} ${s}`} width={s} height={s} fill="none" aria-hidden="true" className="shrink-0">
      {children}
    </svg>
  );
}

const Lens = ({ x = 8, y = 8, r = 4.5 }: { x?: number; y?: number; r?: number }) => (
  <g>
    <circle cx={x} cy={y} r={r} fill="#dfeaf0" stroke="#444" strokeWidth="1.3" />
    <path d={`M${x + r * 0.7} ${y + r * 0.7} l4 4`} stroke="#222" strokeWidth="2.2" />
  </g>
);
const Bell = ({ x = 0 }: { x?: number }) => (
  <g transform={`translate(${x} 0)`}>
    <path d="M4 14 q2.500 -1.500 2.500 -5 q0 -4.500 3.500 -4.500 q3.500 0 3.500 4.500 q0 3.500 2.500 5 z" fill="#ffe81a" stroke="#8a7600" />
    <circle cx="10" cy="15.500" r="1.300" fill="#b89a00" />
  </g>
);
const Plus = ({ x, y, c = "#1010e8" }: { x: number; y: number; c?: string }) => <path d={`M${x - 2} ${y} h4 M${x} ${y - 2} v4`} stroke={c} strokeWidth="1.3" />;
const EffIcon = () => <path d="M14.500 17 v-6 h4 M14.500 14 h3" stroke="#1010e8" strokeWidth="1.600" />;
const Oval = ({ c, f }: { c: string; f: string }) => (
  <Ico>
    <ellipse cx="10" cy="10" rx="6.500" ry="4.800" stroke={c} strokeWidth="1.300" fill={f} />
    <Plus x={3} y={15} />
    <Plus x={17} y={5} />
  </Ico>
);
const Dash = ({ d, c, w = 2 }: { d: string; c: string; w?: number }) => (
  <Ico>
    <path d={d} stroke={c} strokeWidth={w} />
  </Ico>
);
const FLAT = "M1 10 h18";
const THIN_FLAT = "M1 10.500 h18";
const SLANT = "M2 18 L18 2";

const TOOLS: [string, React.ReactNode][] = [
  ["Cursor", <Ico><path d="M7 3 v12 l3 -3 l2 5 l2 -1 l-2 -5 h4 z" fill="#e4ecf0" stroke="#555" /></Ico>],
  ["Zoom", <Ico><Lens x={9} y={8} /></Ico>],
  ["Zoom de zona", <Ico><path d="M2 7 h12 v9 h-12 z" stroke="#2060f0" strokeDasharray="2 2" /><Lens x={11} y={7} /></Ico>],
  ["Alerta en cursor", <Ico><Bell x={-3} /><path d="M2 4.500 h11" stroke="#333" /><path d="M11 2 l5 5 M16 2 l-5 5" stroke="#1010e8" /><path d="M13 6 v9 l2 -2 l2 3 l1 -1 l-1 -3 h3 z" fill="#fff" stroke="#667" strokeWidth="0.700" /></Ico>],
  ["Alerta", <Ico><Bell /><path d="M3 5 q-1.500 2 0 4 M17 5 q1.500 2 0 4" stroke="#667" /></Ico>],
  ["Extensión Fibonacci", <Ico><path d="M1 12 L4 4 L8 12 H14" stroke="#111" strokeWidth="1.300" /><path d="M8 8 h10" stroke="#f08030" strokeDasharray="2 1" /><path d="M8 12.500 h6" stroke="#1010e8" strokeWidth="1.500" /><Plus x={3} y={4} /><EffIcon /></Ico>],
  ["Retroceso Fibonacci", <Ico><path d="M4 8 h10" stroke="#f08030" strokeDasharray="2 1" /><path d="M4 11 h10" stroke="#4060e0" strokeWidth="2" /><EffIcon /></Ico>],
  ["Niveles Fibonacci", <Ico><path d="M4 3 h11" stroke="#d8e6c0" /><path d="M4 6 h11" stroke="#50c050" strokeWidth="2" strokeDasharray="3 1" /><path d="M4 9 h10" stroke="#e0c840" /><path d="M4 14 h9" stroke="#a8c4f8" /><EffIcon /></Ico>],
  ["Rectángulo", <Ico><rect x="4" y="6" width="12" height="8" stroke="#6c98f8" /><Plus x={3} y={14} /><Plus x={16} y={5} /></Ico>],
  ["Rectángulo rojo", <Ico><rect x="4" y="6" width="12" height="8" stroke="#e81010" strokeWidth="1.500" fill="#c08c98" /><Plus x={3} y={15} /><Plus x={16} y={5} /></Ico>],
  ["Flecha", <Ico><path d="M5 15 L14 6" stroke="#000" strokeWidth="2" /><path d="M9 3.500 h7 v7 z" fill="#000" /><circle cx="5" cy="15" r="1.800" fill="#fff" stroke="#000" /></Ico>],
  ["Texto", <Ico><rect x="3.500" y="3.500" width="13" height="13" rx="2" stroke="#6c98f8" fill="#a8c8ea" /><path d="M6.500 8 v-1.500 h7 v1.500 M10 6.500 v7 M8.500 13.500 h3" stroke="#111" strokeWidth="1.600" /></Ico>],
  ["Globo de texto", <Ico><path d="M12 15 l5 3 v-5" fill="#a8c8ea" stroke="#6c98f8" /><circle cx="10" cy="9.500" r="6.800" stroke="#6c98f8" fill="#a8c8ea" /><path d="M6.500 7.500 v-1.500 h7 v1.500 M10 6 v7 M8.500 13 h3" stroke="#0c800c" strokeWidth="1.600" /></Ico>],
  ["Segmento", <Ico><path d="M6 13.500 L14 6.500" stroke="#222" strokeWidth="1.200" /><circle cx="5" cy="14.500" r="2" stroke="#222" fill="#b8ccd6" /><circle cx="15" cy="5.500" r="2" stroke="#222" fill="#b8ccd6" /></Ico>],
  ["Semirrecta verde", <Ico><path d="M10 10 h9" stroke="#38b038" strokeWidth="2" /><circle cx="8.500" cy="10" r="1.500" stroke="#38b038" /></Ico>],
  ["Semirrecta roja", <Ico><path d="M10 10 h9" stroke="#f01010" strokeWidth="2" /><circle cx="8.500" cy="10" r="1.500" stroke="#f01010" /></Ico>],
  ["Regla", <Ico><path d="M2 13 L13 2.500 L17.500 7 L7 17.500 z M5.500 10 l1.500 1.500 M8 8 l1.500 1.500 M10 6 l1.500 1.500 M12 4 l1.500 1.500" stroke="#555f66" fill="#b4c2ca" /></Ico>],
  ["Canal", <Ico><rect x="2" y="3" width="16" height="7" fill="#84b0a0" /><rect x="2" y="10" width="16" height="7" fill="#b09ca8" /><path d="M2 3 h16" stroke="#20a020" strokeDasharray="2 1" /><path d="M2 17 h16" stroke="#e04040" strokeDasharray="2 1" /><path d="M2 13 l3 -4 l3 4 l3 -5 l2 3 l4 -7" stroke="#b8d0ff" strokeWidth="1.300" /></Ico>],
  ["Elipse roja", <Oval c="#e81010" f="#b890a0" />],
  ["Elipse marrón", <Oval c="#804820" f="#94908c" />],
  ["Elipse verde", <Oval c="#108030" f="#78a89c" />],
  ["Elipse lima", <Oval c="#20e820" f="#84c8a8" />],
  ["Recta", <Dash d={SLANT} c="#111" w={1} />],
  ["Recta verde", <Dash d={SLANT} c="#38b038" w={1.5} />],
  ["Recta roja", <Dash d={SLANT} c="#f01010" w={2} />],
  ["Horizontal", <Dash d={THIN_FLAT} c="#111" w={1} />],
  ["Horizontal salmón", <Dash d={FLAT} c="#f09080" />],
  ["Horizontal lima", <Dash d={FLAT} c="#20e820" />],
  ["Horizontal verde", <Dash d={FLAT} c="#108010" />],
  ["Horizontal roja", <Dash d={FLAT} c="#f01010" />],
  ["Horizontal celeste", <Dash d={FLAT} c="#6498f8" />],
  ["Horizontal azul", <Dash d={FLAT} c="#1010a8" />],
  ["Vertical", <Dash d="M10.500 1 v18" c="#111" w={1} />],
  ["Ángulo", <Ico><path d="M18 16 H2 L14 5" stroke="#e07080" strokeWidth="1.200" /><path d="M9 9 q3 2 3 6" stroke="#1010e8" strokeWidth="1.600" /><circle cx="16" cy="10" r="1.800" stroke="#1010e8" /></Ico>],
  ["Círculo", <Ico><circle cx="9.500" cy="10" r="6" stroke="#e08850" strokeWidth="1.200" /><Plus x={9} y={11} /><Plus x={13} y={7} /></Ico>],
  ["Ondas 12345", <Ico><path d="M2 14 L6 6 L9 13 L14 3 L17 9" stroke="#70a0f0" /><Plus x={3} y={7} /><Plus x={8} y={4} /><Plus x={15} y={3} /><Plus x={8} y={16} /><Plus x={14} y={11} /></Ico>],
  ["Ondas abc", <Ico><path d="M2 5 L6 13 L12 4 L17 13" stroke="#70a0f0" /><Plus x={5} y={15} /><Plus x={12} y={5} /><Plus x={16} y={15} /></Ico>],
  ["Correcto", <Ico><path d="M3 11 l3 -2 l2 3 l7 -8 l3 1 l-9 12 h-2 z" fill="#40d440" stroke="#208c20" /></Ico>],
  ["Me gusta", <Ico><path d="M3 10 h4 l3 -3 v-4 q3 0 2.500 5 h4 q1 2 0 4 q0 4 -3 5 h-7 l-3.500 -1 z" fill="#40d440" stroke="#208c20" /></Ico>],
  ["Eliminar", <Ico><path d="M3 6 l3 -3 l4 4 l4 -4 l3 3 l-4 4 l4 4 l-3 3 l-4 -4 l-4 4 l-3 -3 l4 -4 z" fill="#f01818" stroke="#a00000" strokeWidth="0.600" /></Ico>],
  ["Aviso", <Ico><path d="M10 3 L18 17 H2 z" fill="#ffb030" stroke="#c07010" strokeLinejoin="round" /><path d="M10 8 v4.500 M10 14 v1.500" stroke="#222" strokeWidth="1.600" /></Ico>],
];

const Chevron = ({ up }: { up?: boolean }) => (
  <svg viewBox="0 0 7 5" width="7" height="5" fill="none" aria-hidden="true">
    <path d={up ? "M1 4 L3.500 1.500 L6 4" : "M1 1 L3.500 3.500 L6 1"} stroke={up ? "#5c7380" : "#1c272d"} strokeWidth="1.300" />
  </svg>
);

/* ----------------------------------------------------------------- chrome */

function Pill({ children, on }: { children: React.ReactNode; on?: boolean }) {
  return (
    <button
      aria-pressed={!!on}
      className={`h-4 rounded-[3px] border px-[2px] leading-none ${on ? "border-[#6f8794] bg-[#8ea5b0]" : "border-[#7d96a3] bg-[#a9c5d3]"}`}
    >
      {children}
    </button>
  );
}

const Rule = () => <span className="h-full w-px shrink-0 bg-[#6f8794]" />;

function Header() {
  return (
    <header className="flex h-[23px] shrink-0 items-center border-y border-[#4b626f] bg-linear-to-b from-[#b9d3e1] to-[#9ab9c6] text-[10px] font-bold text-black">
      <button aria-label="Tipo de gráfico" className="flex w-[25px] justify-center">
        <Ico s={18}>
          <path d="M3.500 7 v9 M8.500 4 v10 M13.500 2 v9" stroke="#1c8c1c" />
          <rect x="2" y="9" width="3" height="5" fill="#38b038" />
          <rect x="7" y="6" width="3" height="6" fill="#38b038" />
          <rect x="12" y="3" width="3" height="6" fill="#38b038" />
        </Ico>
      </button>
      <button aria-label="Vincular" className="flex w-[13px] justify-center">
        <Ico s={14}>
          <path d="M4.500 6 V2 h2 V6 M8.500 6 V2 h2 V6 M4.500 8 v4 h2 V8 M8.500 8 v4 h2 V8" stroke="#6c7f89" />
        </Ico>
      </button>
      <Rule />
      <button className="flex w-[42px] items-center justify-center gap-1">
        UKX <Chevron />
      </button>
      <Rule />
      <div className="flex w-[194px] items-center justify-between px-[3px]">
        <Pill>144s</Pill>
        <Pill>12m</Pill>
        <Pill>56m</Pill>
        <Pill>1h</Pill>
        <Pill on>4h</Pill>
        <Pill>D</Pill>
        <Pill>W</Pill>
        <Pill>M</Pill>
        <Pill>Q</Pill>
      </div>
      <button className="flex w-[52px] items-center justify-center gap-1">
        4 horas <Chevron />
      </button>
      <Rule />
      <div className="flex w-[62px] items-center justify-between px-[3px]">
        <Pill>5kU</Pill>
        <Pill on>10kU</Pill>
      </div>
      <Rule />
      <button className="flex w-[83px] items-center justify-center gap-1">
        10 k unidades <Chevron />
      </button>
      <Rule />
      <button className="flex w-[84px] items-center gap-1 pl-[3px]">
        <Ico s={17}>
          <path d="M1 7 L5 3 L9 7 L12 9 L16 5" stroke="#1ca01c" strokeWidth="1.300" />
          <path d="M1 4 L5 8 L9 3 L13 8 L16 8" stroke="#e05050" />
          <path d="M2 16 v-5 h3 v5 z M8 16 v-4 h3 v4 z" fill="#18d018" />
          <path d="M5 16 v-4 h3 v4 z M11 16 v-5 h4 v5 z" fill="#108010" />
        </Ico>
        Indicadores
      </button>
      <Rule />
      <button aria-label="Más indicadores" className="flex w-3 justify-center">
        <Chevron />
      </button>
      <Rule />
      <span className="ml-2 h-[10px] w-[9px] rounded-[1px] bg-[#dde6ea] text-center text-[9px] leading-[10px] text-[#7d8f98]">i</span>
      <span className="mr-2 ml-[9px] size-2 rounded-full border border-[#7d7d7d] bg-[#909090]" />
      <span className="rounded-[3px] bg-[#4fe04f] px-[3px] leading-[14px] font-normal text-white">+0,18 %</span>
      <span className="mx-1 leading-[14px]">22 ago 2025</span>
      <span className="rounded-[3px] border border-[#9fc79f] bg-[#bcdcbc] px-[2px] leading-3 font-normal">FTSE 100 Cash (1€)</span>
      <div className="flex-1" />
      <Rule />
      <button aria-label="Sincronizar" className="flex w-5 justify-center">
        <Ico s={16}>
          <path d="M8 3 q-5 0 -5 5" stroke="#f05050" strokeWidth="2.400" />
          <path d="M0 7 h6.500 l-3.300 4 z" fill="#f05050" />
          <path d="M8 13 q5 0 5 -5" stroke="#18b018" strokeWidth="2.400" />
          <path d="M9.500 9 h6.500 l-3.300 -4 z" fill="#18b018" />
        </Ico>
      </button>
      <Rule />
      <button aria-label="Minimizar" className="ml-[5px]">
        <Ico s={10}><path d="M1 8 h8" stroke="#6c838f" strokeWidth="1.500" /></Ico>
      </button>
      <button aria-label="Restaurar" className="ml-1">
        <Ico s={10}><path d="M1 4 h5 v4 h-5 z M3.500 4 V1.500 h5.500 v4 h-3" stroke="#6c838f" strokeWidth="1.300" /></Ico>
      </button>
      <button aria-label="Cerrar" className="mr-[5px] ml-1">
        <Ico s={10}><path d="M1.500 1.500 L8.500 8.500 M8.500 1.500 L1.500 8.500" stroke="#6c838f" strokeWidth="1.800" /></Ico>
      </button>
    </header>
  );
}

function Toolbar() {
  return (
    <nav aria-label="Herramientas de dibujo" className="flex w-7 shrink-0 flex-col border-r border-l border-r-[#6f8794] border-l-[#4b626f] bg-[#9bb9c6]">
      <button aria-label="Subir" className="flex h-3 shrink-0 items-center justify-center border-b border-[#7d96a3]">
        <Chevron up />
      </button>
      <div className="min-h-0 flex-1 overflow-hidden">
        {TOOLS.map(([name, icon], i) => (
          <button
            key={name}
            aria-label={name}
            className={`flex h-[22px] w-full items-center justify-center ${i === 0 ? "rounded-[2px] border border-[#6f8794] bg-[#8ba4b0]" : ""}`}
          >
            {icon}
          </button>
        ))}
        <button aria-label="Subida" className="flex h-[22px] w-full items-center justify-center">
          <Ico><path d="M10 4 l5 6 h-3 v7 h-4 v-7 h-3 z" fill="#30a040" /></Ico>
        </button>
      </div>
      <button aria-label="Bajar" className="flex h-3 shrink-0 items-center justify-center border-y border-[#7d96a3] bg-[#b4d0de]">
        <Chevron />
      </button>
      <button aria-label="Configurar gráfico" className="flex h-7 shrink-0 items-center justify-center">
        <Ico>
          <rect x="4" y="4" width="10" height="10" fill="#f0f4f6" stroke="#888" />
          <circle cx="4.500" cy="4.500" r="4" fill="#108018" />
          <path d="M2.500 5.500 h4 M5.300 2 v5 M5.300 2 L2.500 5.500" stroke="#fff" />
          <path d="M8 8 l5 5" stroke="#444" strokeWidth="2.500" />
          <circle cx="14.500" cy="13.500" r="2.500" fill="#f0f4f6" stroke="#333" />
          <path d="M12 17 h6 l-3 3 z" fill="#111" />
        </Ico>
      </button>
      <button aria-label="Más" className="flex h-[26px] shrink-0 items-center justify-center">
        <Ico>
          <path d="M3 9 h3 M8.500 9 h3 M14 9 h3" stroke="#333" strokeWidth="2.500" />
          <path d="M12 13 h6 l-3 3 z" fill="#111" />
        </Ico>
      </button>
    </nav>
  );
}

function Cell({ children }: { children: React.ReactNode }) {
  return <div className="flex h-4 items-center gap-1 border-r border-b border-[#6f8794] bg-[#cbd9e0] px-[2px] whitespace-nowrap">{children}</div>;
}

const Swatch = ({ tone }: { tone: "open" | "gray" | "black" }) => (
  <span className={`size-2 border ${tone === "open" ? "border-[#6f8794]" : tone === "gray" ? "border-[#758a95] bg-[#758a95]" : "border-black bg-black"}`} />
);

function Legend() {
  return (
    <div className="absolute top-0 left-0 flex text-[10px] leading-none font-bold">
      <div className="flex h-4 items-center gap-[3px] border-r border-b border-[#6f8794] bg-[#cbd9e0] px-[2px]">
        <Ico s={11}><path d="M2 8.500 h7 q-1.500 -1 -1.500 -4 q0 -3 -2 -3 q-2 0 -2 3 q0 3 -1.500 4 M1 1 l9 9 M4.500 10.500 h2" stroke="#5b7d98" /></Ico>
        <Ico s={11}><rect x="1" y="1" width="9" height="9" fill="#fff" stroke="#c0ccd2" /><path d="M5.500 2 v3 M3 5 h5 l-2.500 3.500 z" stroke="#f02020" fill="#f02020" /></Ico>
        <Ico s={11}><rect x="1" y="1" width="9" height="9" fill="#fff" stroke="#c0ccd2" /><path d="M5.500 9 v-3 M3 6 h5 l-2.500 -3.500 z" stroke="#10a820" fill="#10a820" /></Ico>
      </div>
      <Cell><Swatch tone="open" />Precio</Cell>
      <Cell><Ico s={10}><path d="M0 2 h2 M3 2 h7 M0 5 h2 M3 5 h7 M0 8 h2 M3 8 h7" stroke="#222" /></Ico></Cell>
      <Cell><Swatch tone="open" />Cierre (W)</Cell>
      <Cell><Swatch tone="gray" />Tunel Domenec v4 (t t t t t)</Cell>
      <Cell>
        <span className="flex size-2">
          <span className="flex-1 bg-black" /><span className="flex-1 bg-[#f0e000]" /><span className="flex-1 bg-[#f010c0]" /><span className="flex-1 bg-[#2020f0]" />
        </span>
        Control Total Doc v.6
      </Cell>
      <Cell><Swatch tone="black" />Multi Avisos (3 f 3 1,5 70 f f)</Cell>
      <Cell><Swatch tone="open" />DS_CotasHist (1 t t t 3 1 1 f f f f t f f f ...)</Cell>
    </div>
  );
}

function Caption({ children, split }: { children: React.ReactNode; split?: "left" | "right" }) {
  return (
    <h2 className="absolute top-0 left-0 flex h-4 items-center gap-1 border-r border-b border-[#6f8794] bg-[#cbd9e0] px-[2px] text-[10px] leading-none font-bold whitespace-nowrap">
      <span className="flex size-2">
        <span className={`flex-1 ${split === "left" ? "bg-black" : "bg-[#6b818d]"}`} />
        <span className={`flex-1 ${split === "right" ? "bg-black" : "bg-[#6b818d]"}`} />
      </span>
      {children}
    </h2>
  );
}

function BottomBar() {
  return (
    <footer className="flex h-[19px] shrink-0 items-center bg-[#9bb9c6]">
      <button aria-label="Dibujar" className="flex h-full w-7 items-center justify-center border-r border-[#6f8794] bg-[#8ba4b0]">
        <Ico s={18}><path d="M2 14 L6 5 L10 14" stroke="#a03030" /><path d="M1 4 l4 5" stroke="#208020" /><path d="M8 15 L15 4" stroke="#f0c020" strokeWidth="2.500" /><path d="M5 16 h6" stroke="#333" /></Ico>
      </button>
      <div className="flex w-[116px] items-center justify-between pr-1 pl-[2px]">
        <button aria-label="Compartir"><Ico s={18}><path d="M4 9 L11 4 M4 9 L11 14" stroke="#fff" strokeWidth="1.500" /><circle cx="4" cy="9" r="2.500" fill="#fff" stroke="#789" strokeWidth="0.500" /><circle cx="11" cy="4" r="2.500" fill="#fff" stroke="#789" strokeWidth="0.500" /><circle cx="11" cy="14" r="2.500" fill="#fff" stroke="#789" strokeWidth="0.500" /><path d="M12 14 h5 l-2.500 3 z" fill="#111" /></Ico></button>
        <button aria-label="Chat"><Ico s={18}><rect x="2" y="2" width="9" height="8" rx="1" fill="#b8ccf0" stroke="#90a8d8" /><path d="M5 6 h11 v8 h-6 l-3 3 v-3 h-2 z" fill="#3070d8" /><path d="M7 10 h1.500 M10 10 h1.500 M13 10 h1.500" stroke="#fff" strokeWidth="1.500" /></Ico></button>
        <button aria-label="Informe"><Ico s={16}><rect x="3" y="2" width="11" height="12" fill="#f4f4f4" stroke="#444" /><path d="M5 5 h7 M5 12 h5" stroke="#333" /><path d="M5 8 l3 3 l4 -4" stroke="#18a018" strokeWidth="1.500" /><path d="M9 9 l3 3" stroke="#e02020" strokeWidth="1.500" /></Ico></button>
        <button aria-label="Órdenes"><Ico s={16}><path d="M1 3 h7 M3 8 h5 M1 13 h7" stroke="#18b018" strokeWidth="3.500" /><path d="M9 3 h4 M9 8 h6 M9 13 h4" stroke="#e03030" strokeWidth="2.500" /><path d="M8.500 1 v14" stroke="#a02020" /></Ico></button>
        <button aria-label="Ventanas"><Ico s={18}><rect x="2" y="2" width="10" height="8" fill="#e8f2fa" stroke="#2868b8" /><path d="M2 3 h10" stroke="#2868b8" strokeWidth="2" /><rect x="6" y="7" width="10" height="9" fill="#fff" stroke="#2868b8" /><path d="M7 14 l3 -4 l2 3 l3 -4" stroke="#e04040" /><path d="M7 11 l3 2 l5 -1" stroke="#18a018" /></Ico></button>
        <button aria-label="Plegar" className="text-[14px] leading-none text-[#23323a]">«</button>
      </div>
      <button aria-label="Desplazar a la izquierda" className="ml-1 flex h-[13px] w-[13px] items-center justify-center rounded-[2px] border border-[#6f8794] bg-[#b0ccda]">
        <Ico s={7}><path d="M5 1 L2.500 3.500 L5 6" stroke="#111" strokeWidth="1.300" /></Ico>
      </button>
      <div className="flex h-[13px] flex-1 justify-end border-y border-[#7d96a3]">
        <div className="mr-8 w-[70px] border-x border-[#6f8794] bg-linear-to-b from-[#b9d3e1] to-[#9dbccb]" />
      </div>
      <button aria-label="Desplazar a la derecha" className="flex h-[13px] w-[13px] items-center justify-center rounded-[2px] border border-[#6f8794] bg-[#b0ccda]">
        <Ico s={7}><path d="M2 1 L4.500 3.500 L2 6" stroke="#111" strokeWidth="1.300" /></Ico>
      </button>
      <div className="flex w-[154px] items-center justify-between pl-[5px]">
        <button aria-label="Deshacer"><Ico s={18}><path d="M4 7 H10 Q15 8 12 15" stroke="#1468d8" strokeWidth="2.300" /><path d="M2 7 l5 -4.500 v9 z" fill="#1468d8" /></Ico></button>
        <button aria-label="Rehacer"><Ico s={18}><path d="M14 7 H8 Q3 8 6 15" stroke="#7ea4cc" strokeWidth="2.300" /><path d="M16 7 l-5 -4.500 v9 z" fill="#7ea4cc" /></Ico></button>
        <button aria-label="Ajustes"><Ico s={18}><rect x="10" y="1" width="5" height="10" fill="#20b838" stroke="#0c7018" /><rect x="2" y="9" width="5" height="6" fill="#e03030" stroke="#901818" /><path d="M5 13 L11 7" stroke="#333" strokeWidth="3" /><path d="M5 13 L11 7" stroke="#eee" strokeWidth="1.500" /></Ico></button>
        <button aria-label="Zoom automático"><Ico s={18}><Lens x={8} y={7} r={5} /><path d="M16 2 v10 M14.500 4 l1.500 -2 l1.500 2 M14.500 10 l1.500 2 l1.500 -2 M1 16 h9 M3 14.500 l-2 1.500 l2 1.500" stroke="#1040e0" /></Ico></button>
        <button aria-label="Alejar"><Ico s={18}><Lens r={5} /><path d="M5.500 8 h5" stroke="#1818c8" strokeWidth="1.800" /></Ico></button>
        <button aria-label="Acercar"><Ico s={18}><Lens r={5} /><path d="M5.500 8 h5 M8 5.500 v5" stroke="#1818c8" strokeWidth="1.800" /></Ico></button>
        <button aria-label="Ir al final"><Ico s={16}><path d="M1 5 h14" stroke="#333" strokeWidth="2" strokeDasharray="2 1" /><path d="M8 7 v4" stroke="#1468d8" strokeWidth="2" /><path d="M4.500 10 h7 l-3.500 4 z" fill="#1468d8" /></Ico></button>
      </div>
    </footer>
  );
}

export default function App() {
  return (
    <div className={`flex h-screen w-full flex-col overflow-hidden bg-white text-black ${FONT}`}>
      <Header />
      <div className="flex min-h-0 flex-1">
        <Toolbar />
        <main className="flex min-w-0 flex-1 flex-col">
          <section className="relative min-h-0 flex-1 border-b border-[#6f8692]">
            <PricePlot />
            <Legend />
          </section>
          <section className="relative h-[124px] border-b border-[#6f8692]">
            <StochPlot />
            <Caption split="right">Sistema de trenes Doc v4 (f f)</Caption>
          </section>
          <section className="relative h-[76px] border-b border-[#6f8692]">
            <WillyPlot />
            <Caption>Willy Doc (t)</Caption>
          </section>
          <section className="relative h-[90px] border-b border-[#6f8692]">
            <AwesomePlot />
            <Caption>Awesome Evolution Doc</Caption>
          </section>
          <section className="relative h-[55px] border-b border-[#6f8692]">
            <ForcePlot />
            <Caption split="left">Barra Fuerza Fondo Mercado v4 (f)</Caption>
          </section>
          <div className="h-[15px] border-b border-[#6f8692]">
            <svg viewBox="28 996 1890 14" className="block h-full w-full" role="img" aria-label="Fechas">
              {GRID_X.map((x) => (
                <line key={x} x1={x + 0.5} x2={x + 0.5} y1="996" y2="999" stroke="#6f8692" />
              ))}
              {DATES.map(([t, x]) => (
                <text key={x} x={x} y="1008" fontSize="10" fontWeight="700" textAnchor="middle" fill="#111">
                  {t}
                </text>
              ))}
            </svg>
          </div>
        </main>
      </div>
      <BottomBar />
    </div>
  );
}
